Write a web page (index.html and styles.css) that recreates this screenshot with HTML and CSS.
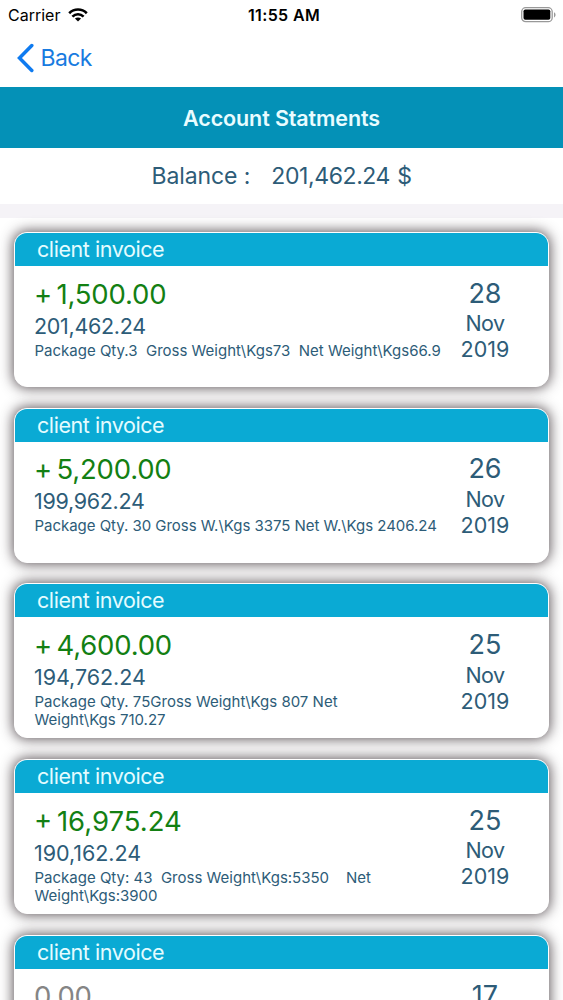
FILE: index.html
```html
<!DOCTYPE html>
<html lang="en">
<head>
<meta charset="utf-8">
<title>Account Statments</title>
<link rel="stylesheet" href="styles.css">
</head>
<body>
<div class="status">
  <div class="status-left"><span class="carrier">Carrier</span>
    <svg class="wifi" width="20" height="14" viewBox="0 0 20 14" fill="none" stroke="#000" stroke-width="2.6"><path d="M1.2 5.2C6.2.3 13.8.3 18.8 5.2"/><path d="M4.4 8.6C7.6 5.5 12.4 5.5 15.6 8.6"/><path d="M10 13.6 6.9 10.5C8.7 9 11.3 9 13.1 10.5Z" fill="#000" stroke="none"/></svg>
  </div>
  <span class="time">11:55 AM</span>
  <svg class="battery" width="36" height="16" viewBox="0 0 36 16"><rect x="1.700" y=".7" width="30.500" height="14" rx="4" fill="#fff" stroke="#999" stroke-width="1.3"/><rect x="3.500" y="2.5" width="26.800" height="10.2" rx="1.8"/><path d="M34 5.3c2 1 2 4.200 0 5.200Z" fill="#999"/></svg>
</div>
<div class="nav">
  <svg class="chevron" width="18" height="30" viewBox="0 0 18 30" fill="none" stroke="#0f7bf0" stroke-width="3.500" stroke-linecap="round" stroke-linejoin="miter"><path d="M15.800 2.500 3.500 15 15.800 27.500"/></svg>
  <span class="back">Back</span>
</div>
<h1 class="title"><span>Account Statments</span></h1>
<div class="balance"><span class="balance-label">Balance :</span><span class="balance-value">201,462.24 $</span></div>
<main class="list">
  <article class="card">
    <header class="card-head">client invoice</header>
    <div class="card-body">
      <div class="details"><div class="amount">+ 1,500.00</div><div class="total">201,462.24</div><div class="note">Package Qty.3&nbsp; Gross Weight\Kgs73&nbsp; Net Weight\Kgs66.9</div></div>
      <div class="date"><div class="day">28</div><div class="month">Nov</div><div class="year">2019</div></div>
    </div>
  </article>
  <article class="card">
    <header class="card-head">client invoice</header>
    <div class="card-body">
      <div class="details"><div class="amount">+ 5,200.00</div><div class="total">199,962.24</div><div class="note tight">Package Qty. 30 Gross W.\Kgs 3375 Net W.\Kgs 2406.24</div></div>
      <div class="date"><div class="day">26</div><div class="month">Nov</div><div class="year">2019</div></div>
    </div>
  </article>
  <article class="card">
    <header class="card-head">client invoice</header>
    <div class="card-body">
      <div class="details"><div class="amount">+ 4,600.00</div><div class="total loose">194,762.24</div><div class="note">Package Qty. 75Gross Weight\Kgs 807 Net<br>Weight\Kgs 710.27</div></div>
      <div class="date"><div class="day">25</div><div class="month">Nov</div><div class="year">2019</div></div>
    </div>
  </article>
  <article class="card">
    <header class="card-head">client invoice</header>
    <div class="card-body">
      <div class="details"><div class="amount wide">+ 16,975.24</div><div class="total loose">190,162.24</div><div class="note">Package Qty: 43&nbsp; Gross Weight\Kgs:5350&nbsp; &nbsp; Net<br>Weight\Kgs:3900</div></div>
      <div class="date"><div class="day">25</div><div class="month">Nov</div><div class="year">2019</div></div>
    </div>
  </article>
  <article class="card">
    <header class="card-head">client invoice</header>
    <div class="card-body">
      <div class="details"><div class="amount zero">0.00</div></div>
      <div class="date"><div class="day">17</div></div>
    </div>
  </article>
</main>
</body>
</html>
```

FILE: styles.css
```css
* { box-sizing: border-box; }
body {
  margin: 0;
  height: 1000px;
  overflow: hidden;
  background: #fff;
  color: #2d5c78;
  font-family: Inter, "Liberation Sans", sans-serif;
  white-space: nowrap;
}
.status {
  display: grid;
  grid-template-columns: 1fr auto 1fr;
  align-items: center;
  height: 29px;
  padding: 0 7px 0 8px;
  color: #000;
  font-size: 16px;
}
.status-left { display: flex; align-items: center; gap: 8px; }
.time { font-weight: 600; letter-spacing: .35px; padding-left: 4px; }
.battery { justify-self: end; }
.nav {
  display: flex;
  align-items: center;
  gap: 6.500px;
  height: 58px;
  padding: 0 0 0 16px;
  color: #187be0;
}
.back { font-size: 23px; letter-spacing: -.6px; }
.title {
  display: flex;
  align-items: center;
  justify-content: center;
  height: 61px;
  margin: 0;
  background: #0491b7;
  color: #e9fcff;
  font-size: 21.500px;
  font-weight: 600;
  letter-spacing: -.12px;
}
.balance {
  display: flex;
  justify-content: center;
  gap: 21px;
  height: 56px;
  padding-top: 13px;
  font-size: 23px;
  line-height: 30px;
}
.balance-label { letter-spacing: -.1px; }
.balance-value { letter-spacing: -.4px; word-spacing: 1px; }
.list {
  display: flex;
  flex-direction: column;
  gap: 20.600px;
  padding: 14.200px 14px 0;
  border-top: 14px solid #f5f3f7;
}
.card {
  flex: none;
  height: 155px;
  border: 1px solid #fff;
  border-radius: 13px;
  background: #fff;
  box-shadow: 0 0 13px 1px rgba(45, 35, 40, .78);
}
.card-head {
  height: 33px;
  padding-left: 22px;
  border-radius: 12px 12px 0 0;
  background: #0aaad4;
  color: #e4fcff;
  font-size: 21.500px;
  letter-spacing: -.43px;
  line-height: 33px;
}
.card-body { display: flex; justify-content: space-between; padding: 10.700px 25px 0 19px; }
.amount { color: #138013; font-size: 27.500px; letter-spacing: -.2px; word-spacing: -3px; line-height: 34px; }
.amount.zero { color: #858585; }
.amount.wide { letter-spacing: 0; }
.total { font-size: 21.500px; letter-spacing: -.3px; line-height: 31px; }
.total.loose { letter-spacing: -.05px; }
.note { padding-left: .5px; font-size: 15px; line-height: 18px; }
.note.tight { letter-spacing: -.03px; }
.date { width: 76px; text-align: center; }
.day { font-size: 27px; line-height: 34px; }
.month, .year { font-size: 21.500px; line-height: 26px; }
.month { margin-top: -.5px; letter-spacing: -.6px; }
```
